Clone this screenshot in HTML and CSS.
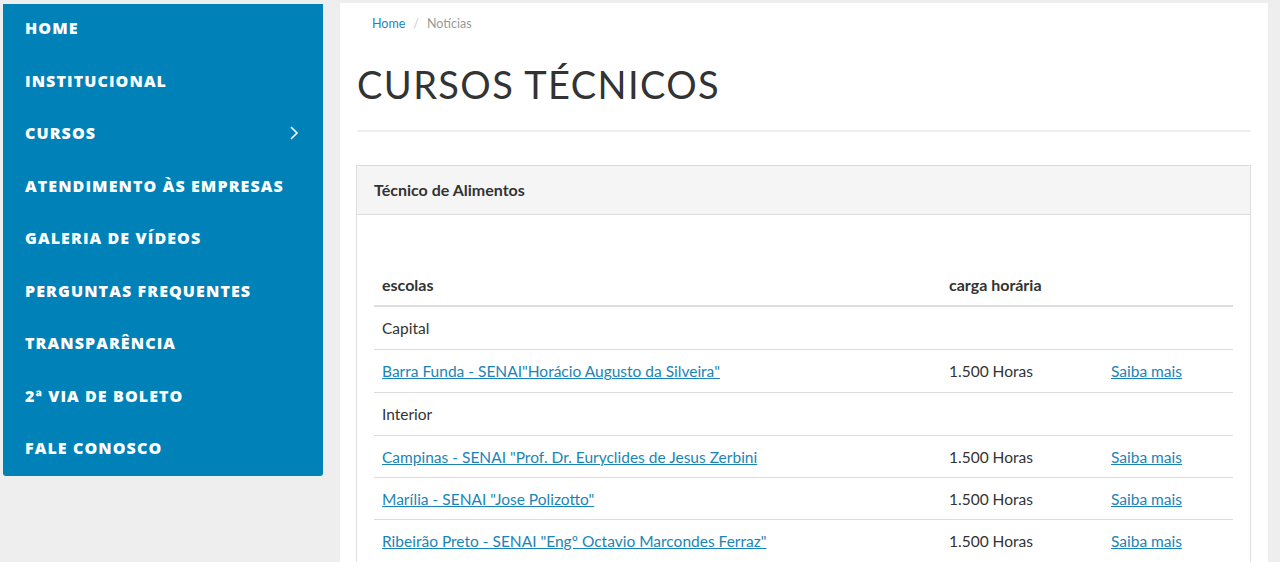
FILE: index.html
```html
<!DOCTYPE html>
<html lang="pt-BR">
<head>
<meta charset="utf-8">
<title>Cursos Técnicos</title>
<link rel="stylesheet" href="styles.css">
</head>
<body>
<div class="page">
	<nav class="sidebar">
		<ul class="menu">
			<li><a href="#">Home</a></li>
			<li><a href="#">Institucional</a></li>
			<li class="has-sub"><a href="#">Cursos
				<svg class="chevron" width="10" height="16" viewBox="0 0 10 16"><path d="M2 2 L8 8 L2 14" fill="none" stroke="#fff" stroke-width="1.6"/></svg></a></li>
			<li><a href="#">Atendimento às empresas</a></li>
			<li><a href="#">Galeria de vídeos</a></li>
			<li><a href="#">Perguntas frequentes</a></li>
			<li><a href="#">Transparência</a></li>
			<li><a href="#">2ª via de boleto</a></li>
			<li><a href="#">Fale conosco</a></li>
		</ul>
	</nav>

	<main class="content">
		<ol class="breadcrumb">
			<li><a href="#">Home</a></li>
			<li class="active">Notícias</li>
		</ol>

		<h1 class="page-title">Cursos Técnicos</h1>

		<div class="panel">
			<div class="panel-heading">Técnico de Alimentos</div>
			<div class="panel-body">
				<table class="courses">
					<thead>
						<tr><th class="col-school">escolas</th><th class="col-hours">carga horária</th><th class="col-more"></th></tr>
					</thead>
					<tbody>
						<tr><td colspan="3">Capital</td></tr>
						<tr><td><a href="#">Barra Funda - SENAI"Horácio Augusto da Silveira"</a></td><td>1.500 Horas</td><td><a href="#">Saiba mais</a></td></tr>
						<tr><td colspan="3">Interior</td></tr>
						<tr><td><a href="#">Campinas - SENAI "Prof. Dr. Euryclides de Jesus Zerbini</a></td><td>1.500 Horas</td><td><a href="#">Saiba mais</a></td></tr>
						<tr><td><a href="#">Marília - SENAI "Jose Polizotto"</a></td><td>1.500 Horas</td><td><a href="#">Saiba mais</a></td></tr>
						<tr><td><a href="#">Ribeirão Preto - SENAI "Engº Octavio Marcondes Ferraz"</a></td><td>1.500 Horas</td><td><a href="#">Saiba mais</a></td></tr>
					</tbody>
				</table>
			</div>
		</div>
	</main>
</div>
</body>
</html>
```

FILE: styles.css
```css
html, body {
	margin: 0;
	height: 100%;
}
body {
	background: #eeeeee;
	font-family: Lato, "Liberation Sans", sans-serif;
	color: #333;
	overflow: hidden;
}
a { color: #1a85b5; }

.page {
	display: flex;
	align-items: flex-start;
	gap: 17px;
	padding: 3px 12px 0 3px;
}

/* side menu */
.sidebar {
	flex: 0 0 320px;
	margin-top: 1px;
	background: #0082b9;
	border-radius: 0 0 3px 3px;
	padding: 0 0 1px;
}
.menu {
	list-style: none;
	margin: -2px 0 0;
	padding: 0;
}
.menu li a {
	display: flex;
	align-items: center;
	justify-content: space-between;
	height: 52.5px;
	padding: 0 24px 0 22px;
	color: #fff;
	text-decoration: none;
	text-transform: uppercase;
	font-family: "Open Sans", sans-serif;
	font-weight: 800;
	font-size: 16px;
	letter-spacing: 1.1px;
}

/* main column */
.content {
	flex: 1;
	background: #fff;
	min-height: 600px;
	padding: 0 17px 0 16px;
}
.breadcrumb {
	list-style: none;
	margin: 0;
	padding: 12px 0 0 16px;
	display: flex;
	font-size: 12.5px;
	line-height: 18px;
}
.breadcrumb a { text-decoration: none; }
.breadcrumb li + li::before {
	content: "/";
	color: #ccc;
	padding: 0 8px;
}
.breadcrumb .active { color: #999; }

.page-title {
	margin: 29px 0 0 1px;
	padding-bottom: 24px;
	border-bottom: 2px solid #eee;
	font-weight: 400;
	font-size: 38px;
	line-height: 44px;
	letter-spacing: 1.4px;
	text-transform: uppercase;
	color: #333;
}

.panel {
	margin-top: 33px;
	border: 1px solid #ddd;
}
.panel-heading {
	background: #f5f5f5;
	border-bottom: 1px solid #ddd;
	height: 48px;
	line-height: 48px;
	padding: 0 17px;
	font-weight: 700;
	font-size: 16px;
}
.panel-body {
	padding: 49px 17px 30px;
}

.courses {
	width: 100%;
	border-collapse: collapse;
	font-size: 15.5px;
}
.courses th, .courses td {
	text-align: left;
	padding: 10px 8px;
	line-height: 22px;
}
.courses th {
	font-weight: 700;
	font-size: 16px;
	border-bottom: 2px solid #ddd;
	padding-bottom: 9px;
}
.courses tbody tr + tr td { border-top: 1px solid #ddd; }
.courses tbody tr:nth-child(n+4) td { padding-top: 9.5px; padding-bottom: 9.5px; }
.col-school { width: 551px; }
.col-hours { width: 146px; }
```
